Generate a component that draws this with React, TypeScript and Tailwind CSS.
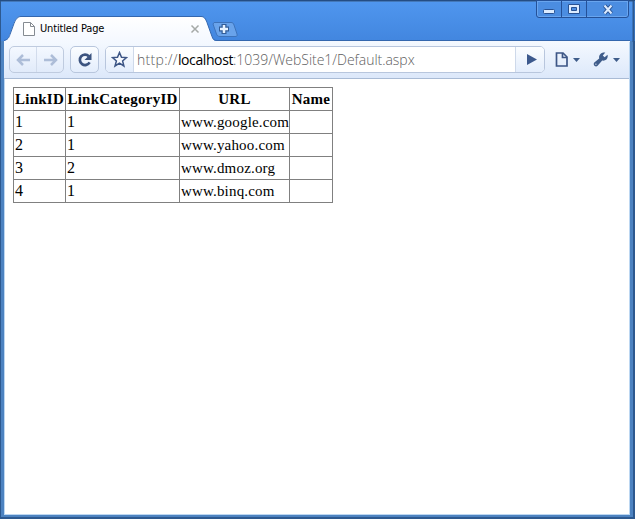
const links = [
  ['1', '1', 'www.google.com'],
  ['2', '1', 'www.yahoo.com'],
  ['3', '2', 'www.dmoz.org'],
  ['4', '1', 'www.binq.com'],
];

function PageIcon() {
  return (
    <svg width="13" height="15" viewBox="0 0 13 15" fill="#fff" stroke="#858b92">
      <path d="M.5.5h7l4 4v9H.5z" />
      <path d="M7.500.5v4h4" fill="none" />
    </svg>
  );
}

function Caret() {
  return (
    <svg className="shrink-0" width="7" height="4" viewBox="0 0 7 4" fill="#3f5c8a">
      <path d="M0 0h7L3.500 4z" />
    </svg>
  );
}

function Arrow({ flip = false }: { flip?: boolean }) {
  return (
    <svg width="15" height="12" viewBox="0 0 15 12" fill="none" stroke="#adbdd8" strokeWidth="2.500" className={flip ? 'rotate-180' : ''}>
      <path d="M14 6H2M7 1L2 6l5 5" />
    </svg>
  );
}

function WindowButtons() {
  return (
    <div className="absolute top-0 left-[536px] flex h-[18px] w-[93px] rounded-b-[3px] border border-[#245198] bg-[#4b8de1] shadow-[inset_0_0_0_1px_#69a5ee]">
      <div className="flex w-[25px] items-center justify-center border-r border-[#245198] pt-1">
        <svg width="12" height="5" viewBox="0 0 12 5"><rect x=".5" y=".5" width="11" height="4" rx="1" fill="#dcecff" stroke="#285293" /></svg>
      </div>
      <div className="flex w-[25px] items-center justify-center border-r border-[#245198]">
        <svg width="12" height="10" viewBox="0 0 12 10"><path d="M.5.5h11v9H.5z" fill="#dcecff" stroke="#285293" /><path d="M3.500 3.500h5v3h-5z" fill="#4b8de1" stroke="#285293" /></svg>
      </div>
      <div className="flex flex-1 items-center justify-center">
        <svg width="12" height="11" viewBox="0 0 12 11" fill="none"><path d="M2.500 1.500l7 8M9.500 1.500l-7 8" stroke="#285293" strokeWidth="4" /><path d="M2.500 1.500l7 8M9.500 1.500l-7 8" stroke="#dcecff" strokeWidth="2" /></svg>
      </div>
    </div>
  );
}

function TabStrip() {
  return (
    <div className="relative h-[41px] shrink-0 bg-linear-to-b from-[#5097ef] to-[#4286df]">
      <svg className="absolute top-0 left-0" width="635" height="42" viewBox="0 0 635 42">
        <defs>
          <linearGradient id="tab" x1="0" y1="0" x2="0" y2="1">
            <stop offset="0" stopColor="#fff" />
            <stop offset="1" stopColor="#f4f8ff" />
          </linearGradient>
        </defs>
        <path d="M0 .5h635" stroke="#244d83" />
        <path d="M1 1.500h633" stroke="#4378b9" />
        <path d="M.5 1v41" stroke="#2d5990" />
        <path d="M633.500 1v41" stroke="#2d5990" strokeWidth="2" />
        <path d="M4 42v-1c4-1 5-4 6-7l4-11c2-5 4-6.500 7-6.500h180c3 0 4.500 2 6 6l5 14c1 3 2 4.500 5 4.500h413v1z" fill="url(#tab)" />
        <path d="M4 40.500c4-1 5-3 6-6l4-11c2-5 4-7 7-7h180c3 0 4.500 2 6 6l5 14c1 3 2 4 5 4h413" fill="none" stroke="#3467ae" />
        <path d="M214 22.500h17c2 0 2.500 1 3 2.500l3 9c.5 2 0 2.500-2 2.500h-15c-2 0-3-1-3.500-2.500l-3.500-10z" fill="#69a3eb" stroke="#3d73bb" />
        <path d="M224 24v10M219 29h10" stroke="#315c98" strokeWidth="5" />
        <path d="M224 25v8M220 29h8" stroke="#e6f2ff" strokeWidth="2.500" />
        <path d="M191.500 25.500l7 7M198.500 25.500l-7 7" stroke="#a5a9a7" strokeWidth="1.500" />
      </svg>
      <div className="relative flex h-full items-center gap-1 pt-[17px] pl-[23px]">
        <PageIcon />
        <span className="whitespace-nowrap font-['DejaVu_Sans_Condensed','DejaVu_Sans',sans-serif] text-[11px] leading-4 tracking-[-0.15px] text-black">Untitled Page</span>
      </div>
      <WindowButtons />
    </div>
  );
}

function Toolbar() {
  return (
    <div className="flex h-[38px] shrink-0 items-center border-b border-[#a9bbd5] bg-linear-to-b from-[#f5f9ff] to-[#dce8fa] pl-[5px]">
      <div className="flex h-[27px] w-[55px] rounded-[5px] border border-[#bfcbdf] bg-linear-to-b from-[#f4f8ff] to-[#e1ebfa]">
        <div className="flex flex-1 items-center justify-center border-r border-[#d2dcec]"><Arrow /></div>
        <div className="flex flex-1 items-center justify-center"><Arrow flip /></div>
      </div>
      <div className="ml-1.5 flex h-[27px] w-[29px] items-center justify-center rounded-[5px] border border-[#b8c6dd] bg-linear-to-b from-[#fbfdff] to-[#e3edfc]">
        <svg width="16" height="16" viewBox="0 0 16 16">
          <path d="M11.800 4.200A5.200 5.200 0 1 0 12.600 10.400" fill="none" stroke="#3c5480" strokeWidth="2.700" />
          <path d="M14.500 1v7H7.500z" fill="#3c5480" />
        </svg>
      </div>
      <div className="ml-1.5 flex h-[27px] w-[440px] overflow-hidden rounded-[5px] border border-[#b8c6dd] bg-white">
        <div className="flex w-7 items-center justify-center border-r border-[#ced9ea] bg-linear-to-b from-[#fbfdff] to-[#e3edfc]">
          <svg width="17" height="17" viewBox="0 0 17 17"><path d="M8.500 1.500l2 4.800 5 .3-3.900 3.300 1.300 5.100-4.400-2.800L4 15l1.400-5.100-3.900-3.300 5-.3z" fill="#f7faff" stroke="#3d5686" strokeWidth="1.500" /></svg>
        </div>
        <div className="flex-1 whitespace-nowrap pl-[3px] font-['Open_Sans','Noto_Sans',sans-serif] text-[14px] leading-[25px] font-light text-[#606060]"><span className="tracking-[0.3px]">http://</span><span className="font-normal tracking-[-0.4px] text-black">localhost</span><span className="tracking-[-0.03px]">:1039/WebSite1/Default.aspx</span></div>
        <div className="flex w-[29px] items-center justify-center border-l border-[#ced9ea] bg-linear-to-b from-[#fbfdff] to-[#e3edfc]">
          <svg className="ml-[3px]" width="10" height="11" viewBox="0 0 10 11"><path d="M0 0l10 5.500L0 11z" fill="#3c598d" /></svg>
        </div>
      </div>
      <div className="ml-[10px] flex w-[25px] items-center gap-1">
        <svg className="shrink-0" width="14" height="15" viewBox="0 0 14 15" fill="none" stroke="#3d5686" strokeWidth="1.700"><path d="M1.500 1h6.500l4 4v9H1.500z" /><path d="M7.500 1v4.500H12" /></svg>
        <Caret />
      </div>
      <div className="ml-[13px] flex items-center gap-[5px]">
        <svg width="15" height="15" viewBox="0 0 15 15" fill="#3f5c8a">
          <path d="M12.300.6L9.800 3.400l1.800 1.800 2.900-2.500c1 3.600-1.500 6.500-5.300 5.900L4.600 13.700C2.600 15.800-.6 12.700 1.300 10.600l4.900-4.200C5.400 2.700 8.700-.4 12.300.6z" />
          <circle cx="2.900" cy="12.200" r=".6" fill="#eef5ff" />
        </svg>
        <Caret />
      </div>
    </div>
  );
}

export default function App() {
  return (
    <div className="flex h-[519px] w-[635px] flex-col overflow-hidden bg-[#4a82c7]">
      <TabStrip />
      <div className="flex flex-1 flex-col border-x border-b-2 border-r-2 border-[#2d5990]">
        <div className="flex flex-1 flex-col border-x-[3px] border-b-2 border-[#4d83c1]">
          <div className="flex flex-1 flex-col border-r border-b border-[#bcd7f2] bg-white">
            <Toolbar />
            <main className="flex-1 border-l border-[#bcd7f2] pt-2 pl-2">
              <table className="w-[320px] table-fixed border-collapse font-['Liberation_Serif',serif] text-[16px] leading-[18px] text-black">
                <colgroup><col className="w-[52px]" /><col className="w-[114px]" /><col className="w-[110px]" /><col className="w-[43px]" /></colgroup>
                <thead>
                  <tr className="h-[23px]">
                    {['LinkID', 'LinkCategoryID', 'URL', 'Name'].map((heading) => (
                      <th key={heading} className="border border-[#808080] p-0 text-center text-[15px] font-bold tracking-[0.25px]">{heading}</th>
                    ))}
                  </tr>
                </thead>
                <tbody>
                  {links.map(([id, category, url]) => (
                    <tr key={id} className="h-[23px]">
                      <td className="border border-[#808080] p-0 pl-px">{id}</td>
                      <td className="border border-[#808080] p-0 pl-px">{category}</td>
                      <td className="border border-[#808080] p-0 pl-px text-[15px] tracking-[0.17px]">{url}</td>
                      <td className="border border-[#808080] p-0" />
                    </tr>
                  ))}
                </tbody>
              </table>
            </main>
          </div>
        </div>
      </div>
    </div>
  );
}
